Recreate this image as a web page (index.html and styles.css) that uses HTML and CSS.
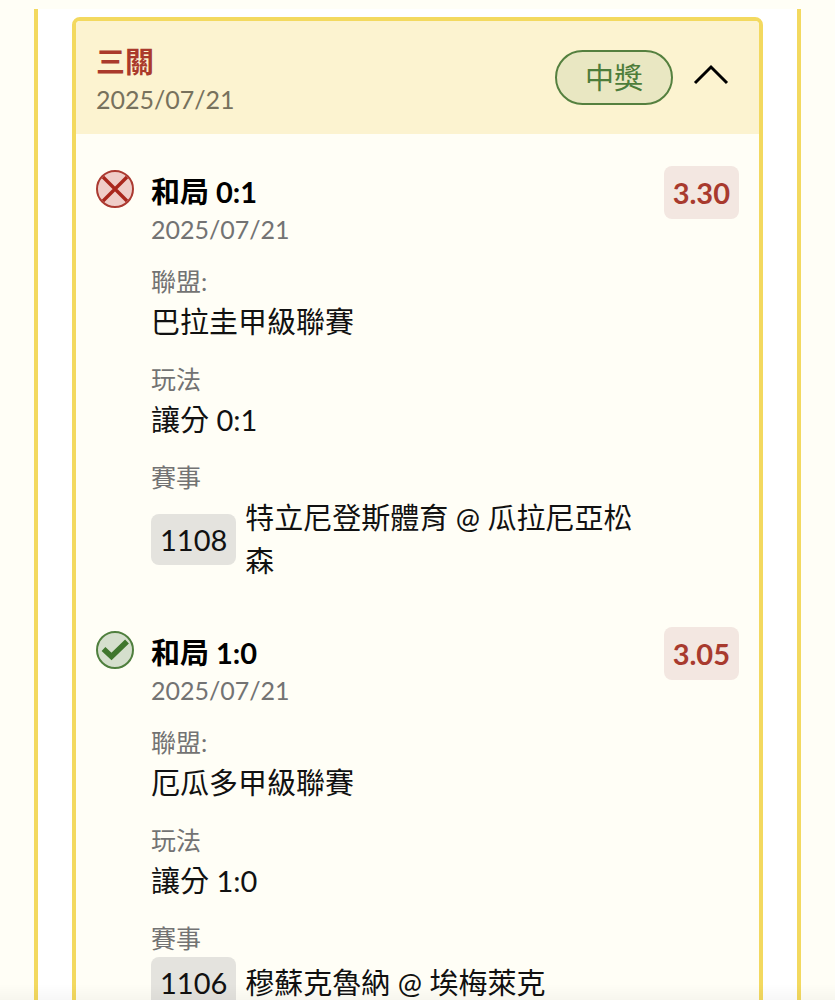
FILE: index.html
```html
<!DOCTYPE html>
<html lang="zh-Hant">
<head>
    <meta charset="UTF-8">
    <meta name="viewport" content="width=device-width, initial-scale=1.0">
    <title>投注紀錄</title>
    <link rel="stylesheet" href="styles.css">
</head>
<body>
    <main class="page">
        <div class="panel">
            <section class="ticket">
                <header class="ticket-header">
                    <div class="ticket-info">
                        <h1 class="ticket-title">三關</h1>
                        <p class="date">2025/07/21</p>
                    </div>
                    <span class="status">中獎</span>
                    <button class="toggle-btn" type="button" aria-label="收合" aria-expanded="true">
                        <svg width="36" height="24" viewBox="0 0 36 24" fill="none" stroke="#000" stroke-width="3">
                            <path d="M2 21 L18 5 L34 21"/>
                        </svg>
                    </button>
                </header>

                <div class="ticket-body">
                    <article class="bet">
                        <svg class="bet-icon" viewBox="0 0 38 38" fill="none">
                            <circle cx="19" cy="19" r="18" fill="#efcdc8" stroke="#ab3a31" stroke-width="2"/>
                            <path d="M7 7 L31 31 M31 7 L7 31" stroke="#a9271d" stroke-width="3.4"/>
                        </svg>
                        <div class="bet-detail">
                            <h2 class="bet-title">和局 0:1</h2>
                            <p class="date">2025/07/21</p>
                            <dl class="fields">
                                <div class="field">
                                    <dt>聯盟:</dt>
                                    <dd>巴拉圭甲級聯賽</dd>
                                </div>
                                <div class="field">
                                    <dt>玩法</dt>
                                    <dd>讓分 0:1</dd>
                                </div>
                                <div class="field">
                                    <dt>賽事</dt>
                                    <dd class="match">
                                        <span class="match-no">1108</span>
                                        <span>特立尼登斯體育 @ 瓜拉尼亞松森</span>
                                    </dd>
                                </div>
                            </dl>
                        </div>
                        <span class="odds">3.30</span>
                    </article>

                    <article class="bet">
                        <svg class="bet-icon" viewBox="0 0 38 38" fill="none">
                            <circle cx="19" cy="19" r="18" fill="#d5dfcd" stroke="#4f7f3e" stroke-width="2"/>
                            <path d="M7.5 18 L15.5 25.5 L31 10.5" stroke="#3f762d" stroke-width="5.5"/>
                        </svg>
                        <div class="bet-detail">
                            <h2 class="bet-title">和局 1:0</h2>
                            <p class="date">2025/07/21</p>
                            <dl class="fields">
                                <div class="field">
                                    <dt>聯盟:</dt>
                                    <dd>厄瓜多甲級聯賽</dd>
                                </div>
                                <div class="field">
                                    <dt>玩法</dt>
                                    <dd>讓分 1:0</dd>
                                </div>
                                <div class="field">
                                    <dt>賽事</dt>
                                    <dd class="match">
                                        <span class="match-no">1106</span>
                                        <span>穆蘇克魯納 @ 埃梅萊克</span>
                                    </dd>
                                </div>
                            </dl>
                        </div>
                        <span class="odds">3.05</span>
                    </article>
                </div>
            </section>
        </div>
    </main>
    <div class="bottom-shade"></div>
</body>
</html>
```
FILE: styles.css
```css
* {
    margin: 0;
    padding: 0;
    box-sizing: border-box;
}

body {
    background-color: #fffef6;
    color: #111;
    font-family: Lato, "Noto Sans CJK TC", sans-serif;
    font-size: 29px;
    line-height: 43px;
}

.page {
    height: 100vh;
    padding: 9px 34px 0;
    overflow-y: auto;
    scrollbar-width: none;
}

.panel {
    padding: 8px 34px 34px;
    background-color: #fff;
    border: solid #f3d95f;
    border-width: 0 4px;
}

.ticket {
    background-color: #fffef6;
    border: 4px solid #f3d95f;
    border-radius: 8px;
    overflow: hidden;
}

.ticket-header {
    display: flex;
    align-items: center;
    padding: 19px 20px;
    background-color: #fcf3d0;
}

.ticket-info {
    flex: 1;
}

.ticket-title {
    color: #aa3a2c;
    font-size: 29px;
    font-weight: bold;
}

.date {
    color: #737373;
    font-size: 25px;
    line-height: 32px;
}

.ticket-header .date {
    color: #77715d;
}

.status {
    padding: 4px 28px;
    margin-right: 10px;
    background-color: #e9e7c2;
    border: 2px solid #55803f;
    border-radius: 28px;
    color: #4d7d3a;
}

.toggle-btn {
    display: flex;
    justify-content: center;
    width: 56px;
    padding-bottom: 8px;
    background: none;
    border: none;
    cursor: pointer;
}

.ticket-body {
    display: flex;
    flex-direction: column;
    gap: 45px;
    padding: 32px 20px;
}

.bet {
    display: flex;
    align-items: flex-start;
}

.bet-icon {
    flex-shrink: 0;
    width: 38px;
    height: 38px;
    margin: 4px 17px 0 0;
}

.bet-detail {
    flex: 1;
    padding-top: 4px;
}

.bet-title {
    color: #000;
    font-size: 29px;
    font-weight: bold;
}

.fields {
    display: flex;
    flex-direction: column;
    gap: 17px;
    margin-top: 17px;
}

.field dt {
    color: #737373;
    font-size: 25px;
    line-height: 38px;
}

.match {
    display: flex;
    align-items: center;
    gap: 9px;
}

.match-no {
    padding: 4px 9px;
    background-color: #e4e3de;
    border-radius: 8px;
}

.odds {
    padding: 5px 9px;
    margin-left: 16px;
    background-color: #f3e7e1;
    border-radius: 8px;
    color: #a83a2e;
    font-weight: bold;
}

/* soft edge above the bottom of the screen */
.bottom-shade {
    position: fixed;
    right: 0;
    bottom: 0;
    left: 0;
    height: 16px;
    background: linear-gradient(transparent, rgba(0, 0, 0, 0.03));
    pointer-events: none;
}
```
